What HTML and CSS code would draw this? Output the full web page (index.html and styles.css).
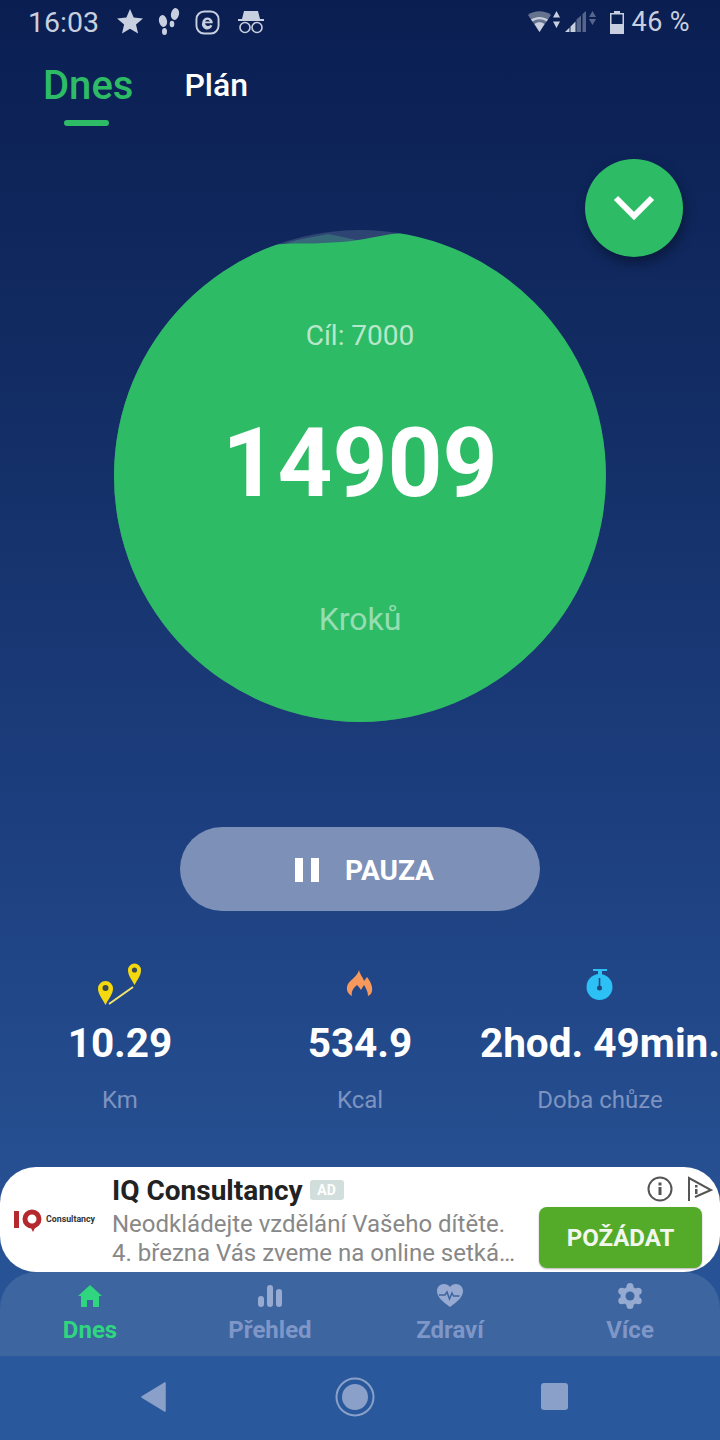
FILE: index.html
```html
<!DOCTYPE html>
<html lang="cs">
<head>
<meta charset="utf-8">
<title>Dnes</title>
<link rel="stylesheet" href="styles.css">
</head>
<body>
<div class="phone">
  <header class="status">
    <div class="status-side">
      <span class="time">16:03</span>
      <svg class="i-star" viewBox="0 0 26 26"><path d="M13 0l3.700 8.600 9.300.8-7 6.100 2.100 9.100-8.100-4.800-8 4.800 2.100-9.100-7-6.100 9.300-.8z"/></svg>
      <svg class="i-feet" viewBox="0 0 22 28"><ellipse cx="5" cy="13" rx="4" ry="6" transform="rotate(-12 5 13)"/><ellipse cx="6.500" cy="23.500" rx="2.500" ry="3.500"/><ellipse cx="17" cy="6" rx="4" ry="6" transform="rotate(12 17 6)"/><ellipse cx="14" cy="16" rx="2.300" ry="3.200"/></svg>
      <svg class="i-e" viewBox="0 0 26 26"><rect x="1.500" y="1.500" width="23" height="23" rx="8" fill="none" stroke="#c8cfde" stroke-width="2"/><path d="M7.500 13a5.500 5.500 0 1 1 11 .8H10.500a3 3 0 0 0 5.500 1.500l2 1.100A5.500 5.500 0 0 1 7.500 13zm3-1h5a2.600 2.600 0 0 0-5 0z"/></svg>
      <svg class="i-spy" viewBox="0 0 26 26"><path d="M6 2h14l2 8H4z"/><rect y="10" width="26" height="2"/><circle cx="7" cy="18.500" r="5" fill="none" stroke="#c8cfde" stroke-width="1.600"/><circle cx="19" cy="18.500" r="5" fill="none" stroke="#c8cfde" stroke-width="1.600"/></svg>
    </div>
    <div class="status-side">
      <svg class="i-wifi" viewBox="0 0 33 22"><path d="M0 4C6-1 17-1 23 4L11.500 21z" fill="#66738f"/><path d="M3 8.500c5-3.500 12-3.500 17 0l-1.500 2c-4.500-3-9.500-3-14 0zM6.500 13c3-2.200 7-2.200 10 0L11.500 21z"/><path d="M28.500 0l3.500 6.500h-7zM28.500 17l-3.500-6.500h7z"/></svg>
      <svg class="i-sig" viewBox="0 0 31 22"><path d="M11.500 8.500L16 4.500V21h-4.500zM17.500 3L21 0v21h-3.500z" fill="#56668a"/><path d="M0 21l4.500-4.500V21zM5.500 15.500L10.500 10.500V21h-5z"/><path d="M27.500 0l3.500 6h-7zM27.500 14l-3.500-6h7z" fill="#56668a"/></svg>
      <svg class="i-batt" viewBox="0 0 14 23"><path d="M4 0h6v2h4v21H0V2h4z"/><rect x="1.500" y="3.500" width="11" height="9.500" fill="#0a1f52"/></svg>
      <span class="pct">46 %</span>
    </div>
  </header>

  <nav class="tabs">
    <div class="tab tab-active">Dnes<span class="tab-bar"></span></div>
    <div class="tab">Plán</div>
  </nav>

  <section class="hero">
    <div class="circle">
      <svg class="circle-bg" viewBox="0 0 492 492">
        <defs><clipPath id="disc"><circle cx="246" cy="246" r="246"/></clipPath></defs>
        <g clip-path="url(#disc)">
          <rect width="492" height="492" fill="#2e4473"/>
          <path d="M0 40L170 14C188 8 200 7 214 4C226 6 238 9 250 12L300 30V492H0z" fill="#36687a"/>
          <path d="M0 40C70 24 130 17 169 14 185 13 197 14 209 13 222 12 233 12 244 10 262 7 275 4 288 3L492 30V492H0z" fill="#2dbb66"/>
        </g>
      </svg>
      <div class="goal">Cíl: 7000</div>
      <div class="steps">14909</div>
      <div class="unit">Kroků</div>
      <button class="fab" type="button" aria-label="Sbalit">
        <svg viewBox="0 0 42 28"><path d="M3 4l18 18L39 4" fill="none" stroke="#fff" stroke-width="6"/></svg>
      </button>
    </div>
  </section>

  <button class="pause" type="button">
    <span class="pause-icon"><i></i><i></i></span>
    <span>PAUZA</span>
  </button>

  <section class="stats">
    <div class="stat">
      <svg class="stat-icon" viewBox="0 0 44 44">
        <path d="M7.500 42C4 35 0 31 0 25.500a7.500 7.500 0 0 1 15 0C15 31 11 35 7.500 42z" fill="#f5d90f"/><circle cx="7.500" cy="25" r="3" fill="#3a4a50"/>
        <path d="M36.500 22C33.500 16 30 13 30 7a6.500 6.500 0 0 1 13 0C43 13 39.500 16 36.500 22z" fill="#f5d90f"/><circle cx="36.500" cy="7" r="2.600" fill="#3a4a50"/>
        <path d="M11 41l24-17" stroke="#f3e56e" stroke-width="2"/>
      </svg>
      <div class="stat-value">10.29</div>
      <div class="stat-label">Km</div>
    </div>
    <div class="stat">
      <svg class="stat-icon" viewBox="0 0 44 44"><path d="M21 7C22 12 25 14 26 18L29 14C32 18 35 23 34 28 33.500 31 32 32 30 33 30 29 28 25 26 22L23 27C21 24 20 23 19 22 15 25 13 29 14 33 10 31 8.500 28 9 24 10 17 19 15 21 7z" fill="#f7985c"/></svg>
      <div class="stat-value">534.9</div>
      <div class="stat-label">Kcal</div>
    </div>
    <div class="stat">
      <svg class="stat-icon" viewBox="0 0 44 44"><path d="M15 6h14v2h-5v5h-4V8h-5z" fill="#2cc0f5"/><circle cx="21.500" cy="24" r="13" fill="#2cc0f5"/><path d="M20.700 15h1.600v8h-1.600z" fill="#24477f"/><circle cx="21.500" cy="25" r="2.500" fill="#24477f"/></svg>
      <div class="stat-value">2hod. 49min.</div>
      <div class="stat-label">Doba chůze</div>
    </div>
  </section>

  <aside class="ad">
    <div class="ad-logo">
      <svg class="ad-mark" viewBox="0 0 30 24"><rect x="0" y="2" width="5" height="17" fill="#b5282e"/><circle cx="18" cy="10" r="7" fill="none" stroke="#b5282e" stroke-width="5"/><path d="M16 17h6l-3 6z" fill="#b5282e"/></svg>
      <span class="ad-logo-text">Consultancy</span>
    </div>
    <div class="ad-copy">
      <div class="ad-title-row"><span class="ad-title">IQ Consultancy</span><span class="ad-badge">AD</span></div>
      <div class="ad-text">Neodkládejte vzdělání Vašeho dítěte.</div>
      <div class="ad-text">4. března Vás zveme na online setká…</div>
    </div>
    <div class="ad-side">
      <div class="ad-icons">
        <svg class="ad-i" viewBox="0 0 26 26"><circle cx="13" cy="13" r="11.500" fill="none" stroke="#555" stroke-width="2"/><rect x="11.500" y="11" width="3" height="8" fill="#555"/><rect x="11.500" y="6.500" width="3" height="3" fill="#555"/></svg>
        <svg class="ad-i" viewBox="0 0 26 26"><path d="M2 25V2l22 12L8 21" fill="none" stroke="#555" stroke-width="2"/><rect x="8" y="9" width="2.500" height="2.500" fill="#555"/><rect x="8" y="13" width="2.500" height="5" fill="#555"/></svg>
      </div>
      <button class="ad-cta" type="button">POŽÁDAT</button>
    </div>
  </aside>

  <nav class="bottom">
    <div class="bottom-item bottom-active">
      <svg viewBox="0 0 26 26"><path d="M13 2L1 13h3v11h6v-7h6v7h6V13h3z" fill="#2fd57f"/></svg>
      <span>Dnes</span>
    </div>
    <div class="bottom-item">
      <svg viewBox="0 0 26 26"><rect x="1" y="13" width="6" height="11" rx="3"/><rect x="10" y="2" width="6" height="22" rx="3"/><rect x="19" y="6" width="6" height="18" rx="3"/></svg>
      <span>Přehled</span>
    </div>
    <div class="bottom-item">
      <svg viewBox="0 0 26 26"><path d="M13 24C6 19 0 14 0 8c0-4 3-7 7-7 2.500 0 4.700 1 6 3 1.300-2 3.500-3 6-3 4 0 7 3 7 7 0 6-6 11-13 16z"/><path d="M2 12h6l2-3 2.500 7 2.500-6 1.500 3h6" fill="none" stroke="#3d659f" stroke-width="1.500"/></svg>
      <span>Zdraví</span>
    </div>
    <div class="bottom-item">
      <svg viewBox="0 0 26 26"><circle cx="13" cy="13" r="9.500"/><circle cx="13" cy="3.500" r="3.500"/><circle cx="13" cy="22.500" r="3.500"/><circle cx="4.800" cy="8.300" r="3.500"/><circle cx="21.200" cy="8.300" r="3.500"/><circle cx="4.800" cy="17.700" r="3.500"/><circle cx="21.200" cy="17.700" r="3.500"/><circle cx="13" cy="13" r="4.500" fill="#3d659f"/></svg>
      <span>Více</span>
    </div>
  </nav>

  <footer class="sys">
    <svg class="sys-back" viewBox="0 0 25 30"><path d="M24 1v28L1 15z" fill="#8aa0c9" stroke="#8aa0c9" stroke-width="1.500" stroke-linejoin="round"/></svg>
    <svg class="sys-home" viewBox="0 0 40 40"><circle cx="20" cy="20" r="18.500" fill="none" stroke="#8aa0c9" stroke-width="2"/><circle cx="20" cy="20" r="13" fill="#8aa0c9"/></svg>
    <span class="sys-recent"></span>
  </footer>
</div>
</body>
</html>
```

FILE: styles.css
```css
* { box-sizing: border-box; }
html, body { margin: 0; padding: 0; }
body { width: 720px; height: 1440px; overflow: hidden; font-family: Roboto, "Liberation Sans", sans-serif; }
button { border: 0; font-family: inherit; padding: 0; }

.phone {
  width: 720px; height: 1440px; display: flex; flex-direction: column;
  background: linear-gradient(180deg, #0a1e52 0%, #112a60 22%, #1d3f7f 58%, #265092 82%, #29589c 100%);
}

.status { height: 42px; padding: 2px 30px 0 28px; display: flex; justify-content: space-between; align-items: center; color: #c8cfde; flex: none; }
.status-side { display: flex; align-items: center; }
.status svg { fill: #c8cfde; display: block; flex: none; }
.time { font-size: 28.500px; width: 89px; }
.pct { font-size: 27px; margin-left: 8px; letter-spacing: .4px; }
.i-star { width: 26px; height: 26px; }
.i-feet { width: 22px; height: 28px; margin-left: 15px; }
.i-e { width: 25px; height: 25px; margin-left: 15px; }
.i-spy { width: 26px; height: 26px; margin-left: 18px; }
.i-wifi { width: 33px; height: 22px; }
.i-sig { width: 31px; height: 22px; margin-left: 4px; }
.i-batt { width: 14px; height: 23px; margin-left: 14px; }

.tabs { height: 88px; padding-left: 43px; display: flex; align-items: flex-start; gap: 51px; flex: none; }
.tab { position: relative; color: #fff; font-size: 32px; font-weight: 500; line-height: 86px; }
.tab-active { color: #2dbb66; font-size: 40px; line-height: 88px; }
.tab-bar { position: absolute; left: 21px; top: 78px; width: 45px; height: 6px; border-radius: 3px; background: #2dbb66; }

.hero { flex: none; display: flex; justify-content: center; padding-top: 100px; }
.circle { position: relative; width: 492px; height: 492px; display: flex; flex-direction: column; align-items: center; }
.circle-bg { position: absolute; inset: 0; width: 492px; height: 492px; }
.goal, .steps, .unit { position: relative; }
.goal { margin-top: 89px; font-size: 28px; line-height: 34px; color: rgba(255,255,255,.68); }
.steps { margin-top: 54px; font-size: 96px; font-weight: 700; line-height: 112px; color: #fff; }
.unit { margin-top: 81px; font-size: 32px; line-height: 38px; color: rgba(255,255,255,.5); }
.fab { position: absolute; left: 471px; top: -71px; width: 98px; height: 98px; border-radius: 50%; background: #2dbb66; box-shadow: 2px 6px 12px rgba(0,0,0,.35); display: flex; align-items: center; justify-content: center; }
.fab svg { width: 42px; height: 28px; display: block; }

.pause { flex: none; align-self: center; margin-top: 105px; padding: 2px 0 0 9px; width: 360px; height: 84px; border-radius: 42px; background: #7d90b8; color: #fff; font-size: 28px; font-weight: 700; display: flex; align-items: center; justify-content: center; gap: 26px; }
.pause-icon { display: flex; gap: 8px; }
.pause-icon i { display: block; width: 8px; height: 24px; background: #fff; }

.stats { flex: none; margin-top: 52px; display: grid; grid-template-columns: repeat(3, 240px); }
.stat { display: flex; flex-direction: column; align-items: center; white-space: nowrap; }
.stat-icon { width: 44px; height: 44px; display: block; }
.stat-value { margin-top: 13px; font-size: 40.500px; font-weight: 700; line-height: 46px; color: #fff; }
.stat-label { margin-top: 19px; font-size: 24px; line-height: 30px; color: #7d93c0; }

.ad { flex: none; margin-top: 52px; height: 105px; border-radius: 36px; background: #fff; display: flex; position: relative; z-index: 1; }
.ad-logo { width: 112px; padding: 42px 0 0 14px; display: flex; align-items: flex-start; flex: none; }
.ad-mark { width: 30px; height: 24px; flex: none; display: block; }
.ad-logo-text { font-size: 8.800px; font-weight: 700; color: #333; margin-left: 2px; line-height: 20px; }
.ad-copy { width: 427px; flex: none; padding-top: 6px; }
.ad-title-row { display: flex; align-items: center; height: 34px; margin-bottom: 3px; }
.ad-title { font-size: 28px; font-weight: 700; color: #222; }
.ad-badge { margin-left: 7px; width: 34px; height: 20px; border-radius: 3px; background: #d2dedb; color: #fff; font-size: 14px; font-weight: 700; text-align: center; line-height: 20px; }
.ad-text { font-size: 24px; line-height: 29px; color: #888; white-space: nowrap; }
.ad-side { flex: 1; min-width: 0; padding-top: 9px; }
.ad-icons { display: flex; gap: 14px; padding-left: 108px; height: 31px; }
.ad-i { width: 26px; height: 26px; display: block; flex: none; }
.ad-cta { display: block; width: 163px; height: 61px; border-radius: 8px; background: #54ab2a; color: #f2f7ee; font-size: 24px; font-weight: 700; box-shadow: 0 1px 2px rgba(0,0,0,.3); }

.bottom { flex: none; height: 84px; background: #3d659f; border-radius: 36px 36px 0 0; display: grid; grid-template-columns: repeat(4, 180px); }
.bottom-item { display: flex; flex-direction: column; align-items: center; padding-top: 11px; color: #7f97c8; font-size: 24px; font-weight: 700; }
.bottom-item svg { width: 26px; height: 26px; fill: #96aad2; display: block; }
.bottom-item span { margin-top: 6px; line-height: 30px; }
.bottom-active { color: #2fd57f; }

.sys { flex: 1; min-height: 0; background: #29589c; display: flex; align-items: center; justify-content: center; padding: 0 12px 3px 0; }
.sys-back { width: 25px; height: 30px; display: block; margin-right: 169px; }
.sys-home { width: 40px; height: 40px; display: block; margin-right: 166px; }
.sys-recent { display: block; width: 27px; height: 27px; border-radius: 3px; background: #8aa0c9; }
```
